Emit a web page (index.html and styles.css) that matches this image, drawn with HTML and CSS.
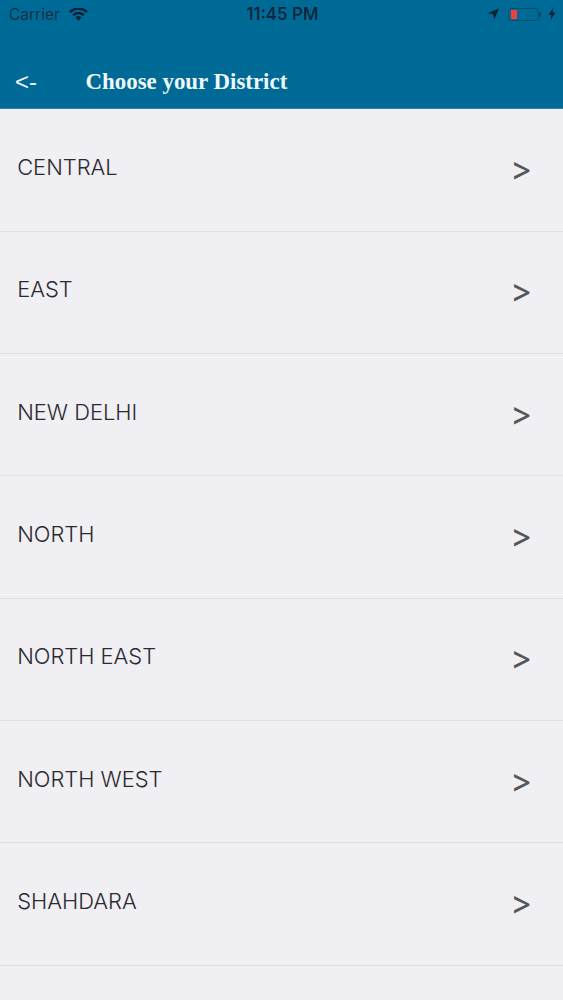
FILE: index.html
```html
<!DOCTYPE html>
<html lang="en">
<head>
    <meta charset="UTF-8">
    <meta name="viewport" content="width=device-width, initial-scale=1.0">
    <title>Choose your District</title>
    <link rel="stylesheet" href="styles.css">
</head>
<body>
    <header class="header">
        <div class="status">
            <div class="status-left">
                <span class="carrier">Carrier</span>
                <svg class="wifi" width="19" height="13" viewBox="0 0 20 14">
                    <path d="M10 13.6 6.7 10.2a4.8 4.8 0 0 1 6.6 0z" fill="#0b2236"/>
                    <path d="M5.2 8.7 3.3 6.7a9.6 9.6 0 0 1 13.4 0l-1.9 2a6.9 6.9 0 0 0-9.6 0z" fill="#0b2236"/>
                    <path d="M1.9 5.3 0 3.4a14.3 14.3 0 0 1 20 0l-1.9 1.9a11.6 11.6 0 0 0-16.2 0z" fill="#0b2236"/>
                </svg>
            </div>
            <span class="time">11:45 PM</span>
            <div class="status-right">
                <svg class="arrow" width="12" height="12" viewBox="0 0 12 12">
                    <path d="M12 .5 7.2 11.5 6 6.2.5 5z" fill="#0b2236"/>
                </svg>
                <div class="battery"><div class="battery-level"></div></div>
                <div class="battery-cap"></div>
                <svg class="bolt" width="8" height="12" viewBox="0 0 8 12">
                    <path d="M5 0 .5 7h2.8L2.6 12 7.5 4.6H4.6z" fill="#0b2236"/>
                </svg>
            </div>
        </div>
        <div class="nav">
            <span class="back">&lt;-</span>
            <h1 class="title">Choose your District</h1>
        </div>
    </header>
    <ul class="districts">
        <li class="district"><span class="name">CENTRAL</span><span class="chevron">&gt;</span></li>
        <li class="district"><span class="name">EAST</span><span class="chevron">&gt;</span></li>
        <li class="district"><span class="name">NEW DELHI</span><span class="chevron">&gt;</span></li>
        <li class="district"><span class="name">NORTH</span><span class="chevron">&gt;</span></li>
        <li class="district"><span class="name">NORTH EAST</span><span class="chevron">&gt;</span></li>
        <li class="district"><span class="name">NORTH WEST</span><span class="chevron">&gt;</span></li>
        <li class="district"><span class="name">SHAHDARA</span><span class="chevron">&gt;</span></li>
    </ul>
</body>
</html>
```

FILE: styles.css
```css
html, body {
    height: 100%;
}
body {
    margin: 0;
    overflow: hidden;
    background-color: #f0eff4;
    font-family: Inter, "Liberation Sans", Arial, sans-serif;
}
.header {
    height: 109px;
    box-sizing: border-box;
    background-color: #006a96;
    border-bottom: 1px solid #2d84ab;
}
.status {
    display: flex;
    justify-content: space-between;
    align-items: center;
    height: 28px;
    padding: 0 7px 0 9px;
    color: #0b2236;
}
.status-left {
    display: flex;
    align-items: center;
    gap: 9px;
    width: 150px;
}
.carrier {
    color: #12304a;
    font-size: 15.5px;
}
.wifi {
    margin-top: 1px;
}
.time {
    font-size: 17px;
    font-weight: 500;
}
.status-right {
    display: flex;
    align-items: center;
    justify-content: flex-end;
    width: 150px;
}
.arrow {
    margin-right: 9px;
}
.battery {
    width: 31px;
    height: 13px;
    box-sizing: border-box;
    border: 1px solid #0f4a6c;
    border-radius: 4px;
    padding: 1px 2px;
}
.battery-level {
    width: 6px;
    height: 100%;
    background-color: #f0403c;
}
.battery-cap {
    width: 2px;
    height: 5px;
    margin-right: 7px;
    background-color: #0f4a6c;
}
.nav {
    display: flex;
    align-items: center;
    height: 50px;
    margin-top: 29px;
    padding-left: 15px;
    color: #eef7fa;
}
.back {
    width: 70.5px;
    font-family: "Liberation Sans", Arial, sans-serif;
    font-size: 24px;
}
.title {
    margin: 0;
    font-family: "Liberation Serif", "Times New Roman", serif;
    font-size: 22.9px;
    font-weight: bold;
}
.districts {
    margin: 0;
    padding: 0.5px 0 0;
    list-style: none;
}
.district {
    display: flex;
    justify-content: space-between;
    align-items: center;
    height: 122.3px;
    box-sizing: border-box;
    padding: 0 31px 6px 17.2px;
    border-bottom: 1px solid #dfdee3;
    color: #2a2a2f;
    font-size: 21.9px;
    font-weight: 300;
}
.chevron {
    margin-top: 2px;
    color: #55555a;
    font-size: 33px;
    font-weight: 400;
}
```
